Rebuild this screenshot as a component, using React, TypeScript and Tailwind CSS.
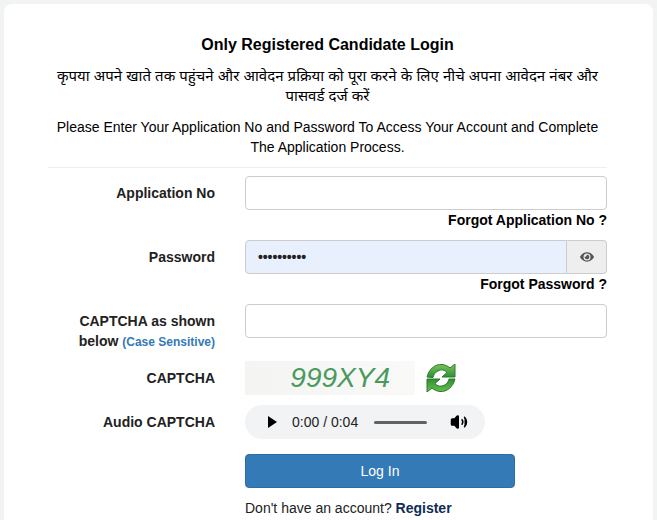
import { FaEye } from "react-icons/fa";
import { Volume2 } from "lucide-react";

const font = "font-['Liberation_Sans','Noto_Sans',sans-serif]";

function Label({ children }: { children: React.ReactNode }) {
    return <label className="block w-[167px] shrink-0 text-right text-[14px] font-bold leading-5 text-[#222]">{children}</label>;
}

function RefreshIcon() {
    return (
        <svg viewBox="0 0 32 32" className="h-[32px] w-[32px]">
            <defs>
                <linearGradient id="arrowTop" x1="0" y1="0" x2="0" y2="1">
                    <stop offset="0" stopColor="#7cc55c" />
                    <stop offset="1" stopColor="#2c8f34" />
                </linearGradient>
                <linearGradient id="arrowBottom" x1="0" y1="0" x2="0" y2="1">
                    <stop offset="0" stopColor="#2c8f34" />
                    <stop offset="1" stopColor="#6cc04f" />
                </linearGradient>
            </defs>
            <path d="M2 15C4 7 10 2 17 2.500c3 .3 6 1.500 8 3.500L30 2v13H17l5-4.500c-2-2-4-3-6.500-2.500C12 9 9 11 8 15.500Z" fill="url(#arrowTop)" stroke="#2a7a2c" strokeWidth="1" strokeLinejoin="round" />
            <path d="M30 17c-2 8-8 13-15 12.500-3-.3-6-1.500-8-3.500L2 30V17h13l-5 4.500c2 2 4 3 6.500 2.500 3.500-.5 6.500-2.500 7.500-7Z" fill="url(#arrowBottom)" stroke="#2a7a2c" strokeWidth="1" strokeLinejoin="round" />
        </svg>
    );
}

export default function App() {
    return (
        <div className={`${font} h-[520px] overflow-hidden bg-[#f1f3f5] px-[4px] pt-[4px] text-[14px] text-[#222]`}>
            <div className="h-[600px] rounded-[8px] bg-white pl-[44px] pr-[46px] pt-[31px]">
                <h2 className="text-center text-[16px] font-bold leading-5 text-black">Only Registered Candidate Login</h2>
                <p className="mt-[11px] text-center text-[15px] leading-[20px] text-black">
                    कृपया अपने खाते तक पहुंचने और आवेदन प्रक्रिया को पूरा करने के लिए नीचे अपना आवेदन नंबर और पासवर्ड दर्ज करें
                </p>
                <p className="mt-[11px] text-center text-[14px] leading-[20px] text-black">
                    Please Enter Your Application No and Password To Access Your Account and Complete The Application Process.
                </p>
                <hr className="mt-[10px] border-t border-[#eeeeee]" />

                <div className="mt-[8px] flex gap-[30px]">
                    <div className="w-[167px] shrink-0 pt-[7px]"><Label>Application No</Label></div>
                    <div className="flex-1">
                        <input className="block h-[34px] w-full rounded-[4px] border border-[#ccc] bg-white" />
                        <div className="text-right text-[14px] font-bold leading-5 text-black">Forgot Application No ?</div>
                    </div>
                </div>

                <div className="mt-[10px] flex gap-[30px]">
                    <div className="w-[167px] shrink-0 pt-[7px]"><Label>Password</Label></div>
                    <div className="flex-1">
                        <div className="flex h-[34px]">
                            <div className="flex flex-1 items-center rounded-l-[4px] border border-[#ccc] bg-[#e8f0fe] pl-[12px] text-[14px] font-bold tracking-[-0.1px] text-[#222]">••••••••••</div>
                            <div className="flex w-[40px] items-center justify-center rounded-r-[4px] border border-l-0 border-[#ccc] bg-[#eeeeee]">
                                <FaEye size={14} className="text-[#555]" />
                            </div>
                        </div>
                        <div className="text-right text-[14px] font-bold leading-5 text-black">Forgot Password ?</div>
                    </div>
                </div>

                <div className="mt-[10px] flex gap-[30px]">
                    <div className="w-[167px] shrink-0 pt-[7px] text-right text-[14px] font-bold leading-[20px] text-[#222]">
                        CAPTCHA as shown below <span className="text-[12px] text-[#337ab7]">(Case Sensitive)</span>
                    </div>
                    <input className="block h-[34px] flex-1 rounded-[4px] border border-[#ccc] bg-white" />
                </div>

                <div className="mt-[9px] flex items-center gap-[30px]">
                    <Label>CAPTCHA</Label>
                    <div className="flex items-center gap-[10px]">
                        <div className="flex h-[34px] w-[170px] items-center justify-end bg-gradient-to-r from-[#f4f4f3] to-[#f9f9f8] pr-[25px] font-['Liberation_Sans',sans-serif] text-[28px] italic leading-none text-[#4a9a5e]">999XY4</div>
                        <RefreshIcon />
                    </div>
                </div>

                <div className="mt-[10px] flex items-center gap-[30px]">
                    <Label>Audio CAPTCHA</Label>
                    <div className="flex h-[34px] w-[240px] items-center rounded-full bg-[#f1f3f4] pl-[22px] text-black">
                        <svg viewBox="0 0 11 14" className="h-[14px] w-[11px]"><path d="M1 1v12l9-6z" fill="black" /></svg>
                        <span className="ml-[14px] text-[14px] text-[#222]">0:00 / 0:04</span>
                        <span className="ml-[16px] h-[3px] w-[53px] rounded-full bg-[#5f6368]" />
                        <Volume2 size={18} fill="black" className="ml-[23px]" />
                    </div>
                </div>

                <div className="ml-[197px]">
                    <button className="mt-[15px] block h-[34px] w-[270px] rounded-[4px] border border-[#2e6da4] bg-[#337ab7] text-[14px] text-white">Log In</button>
                    <p className="mt-[10px] leading-5 text-[#222]">Don't have an account? <b className="text-[#0f2d52]">Register</b></p>
                </div>
            </div>
        </div>
    );
}
